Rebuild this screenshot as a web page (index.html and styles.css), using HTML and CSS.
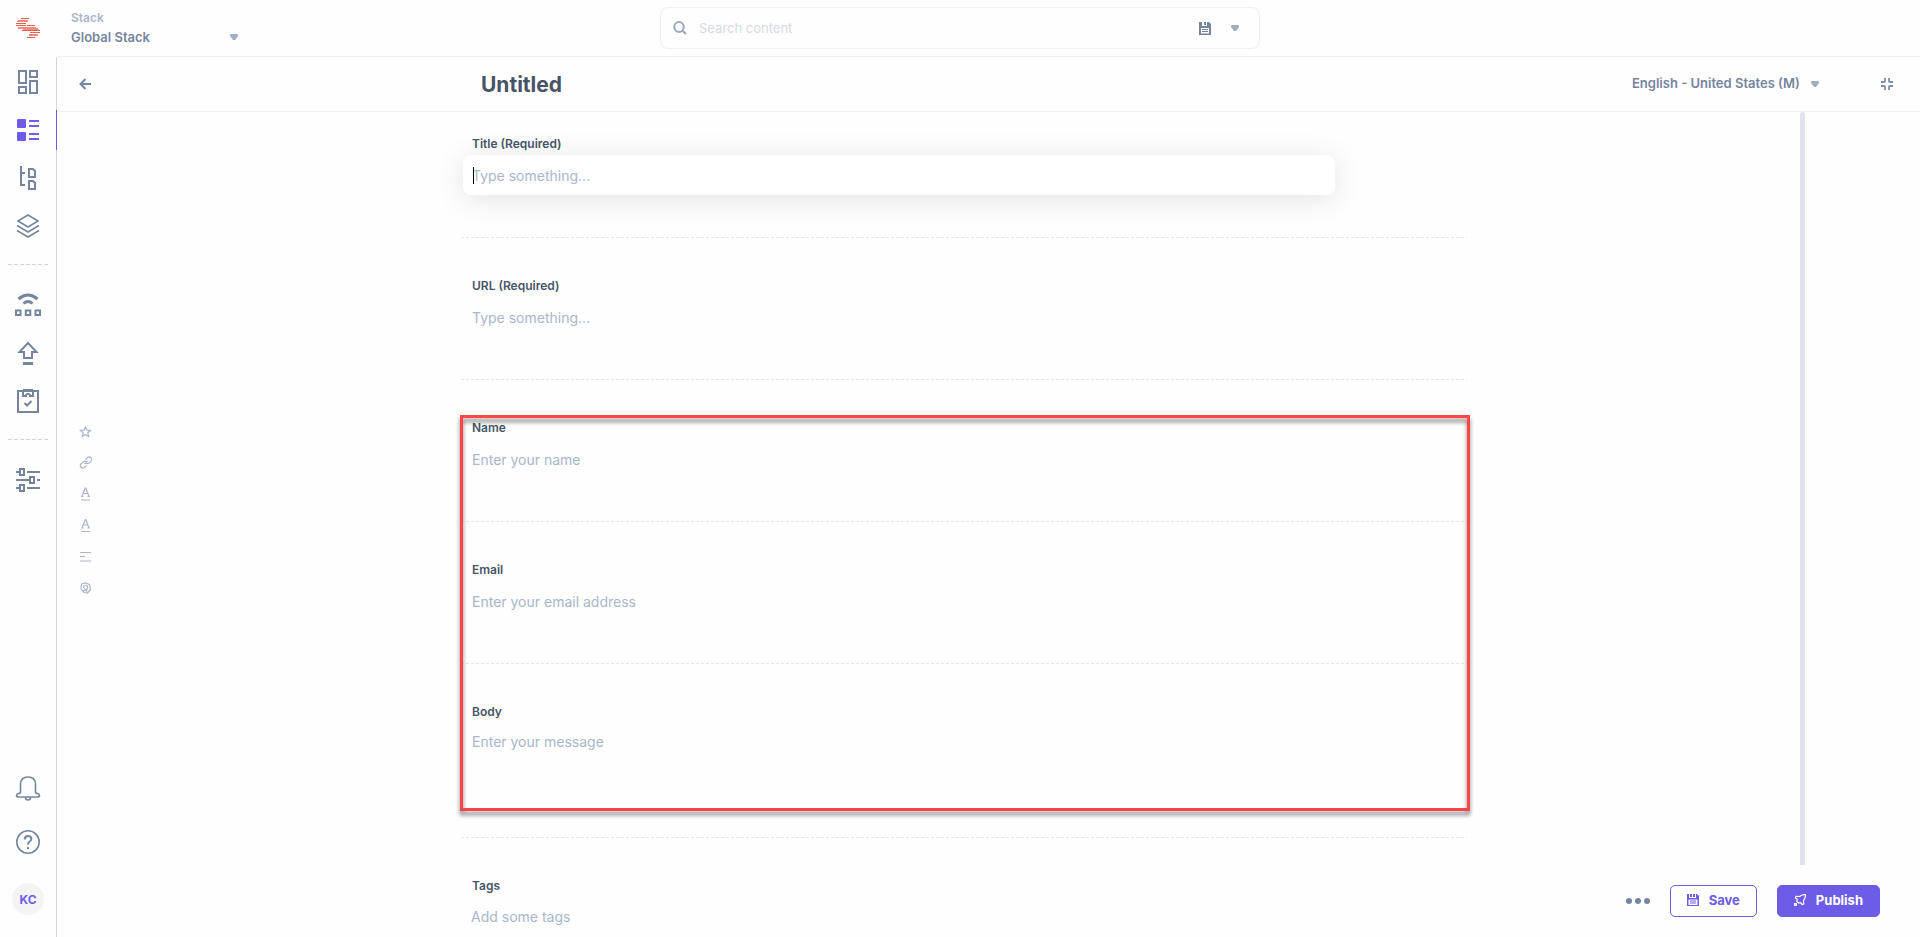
FILE: index.html
```html
<!DOCTYPE html>
<html lang="en">
<head>
<meta charset="utf-8">
<title>Untitled</title>
<link rel="stylesheet" href="styles.css">
</head>
<body>
<div class="app">
  <header class="topbar">
    <div class="topbar-left">
      <a class="logo" href="#" aria-label="Home">
        <svg width="24" height="20" viewBox="0 0 24 20">
          <g fill="#e8604f"><path d="M5 0h8v1H5zM0 5h10v1H0zM0 7h10v1H0zM11 7h8v1h-8zM6 12h8v1H6zM14 12h10v1H14zM14 14h10v1H14zM11 19h8v1h-8z"/></g>
          <g fill="#f58a7d"><path d="M2 2h10v2H2zM1 3h9v1H1zM2 9h18v2H2zM5 10h17v1H5zM7 11h16v1H7zM13 16h9v2h-9z"/></g>
        </svg>
      </a>
      <div class="stack">
        <label class="stack-label" for="stack">Stack</label>
        <div class="picker">
          <select id="stack" class="stack-select"><option>Global Stack</option></select>
          <svg class="caret" width="8" height="6" viewBox="0 0 8 6"><path d="M1 0h6q1 0 1 1v1L5 6H3L0 2V1q0-1 1-1z"/></svg>
        </div>
      </div>
    </div>
    <form class="search">
      <svg width="14" height="14" viewBox="0 0 14 14" fill="none" stroke="#98a7bf" stroke-width="2"><ellipse cx="6" cy="6" rx="4.7" ry="4.9"/><path d="M9.3 9.6 13 13"/></svg>
      <input class="search-input" type="text" aria-label="Search content" placeholder="Search content">
      <button class="icon-btn" type="button" aria-label="Save search">
        <svg width="12" height="13" viewBox="0 0 12 13"><path fill="#76859e" fill-rule="evenodd" d="M0 0h3v4h5V0h2l2 2v11H0zM5 0h2v3H5zM2 6v5.500h8V6zM3 7h6v1H3zM3 9h6v1H3z"/></svg>
      </button>
      <button class="icon-btn" type="button" aria-label="Saved searches">
        <svg class="caret" width="8" height="6" viewBox="0 0 8 6"><path d="M1 0h6q1 0 1 1v1L5 6H3L0 2V1q0-1 1-1z"/></svg>
      </button>
    </form>
  </header>

  <nav class="sidebar" aria-label="Main">
    <a class="nav-item" href="#" aria-label="Dashboard"><svg width="24" height="24" viewBox="0 0 24 24"><path d="M3 1h7v12H3zM14 1h7v6h-7zM3 17h7v6H3zM14 11h7v12h-7z"/></svg></a>
    <a class="nav-item active" href="#" aria-label="Entries"><svg width="24" height="24" viewBox="0 0 24 24"><path class="solid" d="M2 1h7q1 0 1 1v7q0 1-1 1H2q-1 0-1-1V2q0-1 1-1zM2 14h7q1 0 1 1v7q0 1-1 1H2q-1 0-1-1v-7q0-1 1-1z"/><path d="M13 3h10M13 8h10M13 16h10M13 21h10"/></svg></a>
    <a class="nav-item" href="#" aria-label="Content types"><svg width="24" height="24" viewBox="0 0 24 24"><path d="M5 0v19h4M5 7h4M13 3h4l2 2v6h-6zM13 15h4l2 2v6h-6z"/></svg></a>
    <a class="nav-item" href="#" aria-label="Assets"><svg width="24" height="24" viewBox="0 0 24 24"><path class="thin" d="M12 1 22 7 12 13 2 7zM1 11.500 12 18 23 11.500M1 16.500 12 23 23 16.500"/></svg></a>
    <span class="nav-rule"></span>
    <a class="nav-item" href="#" aria-label="Publish queue"><svg width="26" height="24" viewBox="0 0 26 24"><path class="thick" d="M3.500 6Q13-2 22.500 6M8.500 10.500Q13 6.500 17.500 10.500"/><path d="M1 17.500h4.500v4.500H1zM10.800 17.500h4.500v4.500h-4.500zM20.500 17.500H25v4.500h-4.500z"/></svg></a>
    <a class="nav-item" href="#" aria-label="Releases"><svg width="24" height="24" viewBox="0 0 24 24"><path d="M12 2 20.500 11H16v6H8v-6H3.500z"/><path class="thick" d="M7 22.500h10"/></svg></a>
    <a class="nav-item" href="#" aria-label="Tasks"><svg width="24" height="24" viewBox="0 0 24 24"><path d="M2 2h20v21H2zM7 2v5h3V6q2-2.500 4 0v1h3V2M7 1h10M8.500 14l2.500 2.500 4.500-4.500"/></svg></a>
    <span class="nav-rule"></span>
    <a class="nav-item" href="#" aria-label="Settings"><svg width="24" height="24" viewBox="0 0 24 24"><path d="M0 4h4M4 1h4v6H4zM11 4h13M0 12h13M14 9h4v6h-4zM21 12h3M0 20h4M4 17h4v6H4zM11 20h13"/></svg></a>
    <div class="nav-foot">
      <a class="foot-item" href="#" aria-label="Notifications"><svg width="26" height="26" viewBox="0 0 26 26"><path class="thin" d="M5.500 17V9.500q0-7.500 7.500-7.500t7.500 7.500V17q0 1.500 2 1.500 2 .5 2 2t-2 1.500h-19q-2 0-2-1.500t2-2q2 0 2-1.500zM10.500 22.500q0 2.500 2.500 2.500t2.500-2.500"/></svg></a>
      <a class="foot-item" href="#" aria-label="Help"><svg width="26" height="26" viewBox="0 0 26 26"><circle class="thin" cx="13" cy="13" r="11.200"/><path d="M9.700 10.500q0-3.500 3.300-3.500t3.300 3q0 1.500-1.600 2.500-1.700 1-1.700 3M13 18v2"/></svg></a>
      <button class="avatar" type="button">KC</button>
    </div>
  </nav>

  <main class="main">
    <div class="entry-head">
      <button class="icon-btn back" type="button" aria-label="Back"><svg width="12" height="12" viewBox="0 0 12 12" fill="none" stroke="#76859e" stroke-width="2"><path d="M12 6H1.500M6.500 1 1.500 6l5 5"/></svg></button>
      <h1 class="entry-title">Untitled</h1>
      <div class="entry-tools">
        <div class="picker">
          <select class="lang-select" aria-label="Language"><option>English - United States (M)</option></select>
          <svg class="caret" width="8" height="6" viewBox="0 0 8 6"><path d="M1 0h6q1 0 1 1v1L5 6H3L0 2V1q0-1 1-1z"/></svg>
        </div>
        <button class="icon-btn" type="button" aria-label="Collapse"><svg width="12" height="12" viewBox="0 0 12 12" fill="none" stroke="#7f8da8" stroke-width="1.800"><path d="M0 4h3q1 0 1-1V0M8 0v3q0 1 1 1h3M0 8h3q1 0 1 1v3M12 8H9Q8 8 8 9v3"/></svg></button>
      </div>
    </div>

    <div class="entry-body">
      <div class="tools">
        <button class="tool" type="button" aria-label="Title field"><svg width="16" height="16" viewBox="0 0 16 16"><path d="m7.500 3 1.400 3.200 3.600.3-2.700 2.300.9 3.700-3.200-2-3.200 2 .9-3.700-2.700-2.300 3.600-.3z"/></svg></button>
        <button class="tool" type="button" aria-label="URL field"><svg width="16" height="16" viewBox="0 0 16 16"><path d="m7.500 4.500 2-2q1.800-1.300 3.400.2 1.500 1.600.2 3.400l-2 2q-1.700 1.300-3.300 0M8.500 10.500l-2 2q-1.800 1.300-3.400-.2-1.500-1.600-.2-3.400l2-2q1.700-1.300 3.300 0M6.500 9l3-3"/></svg></button>
        <button class="tool" type="button" aria-label="Name field"><svg width="16" height="16" viewBox="0 0 16 16"><path d="M4 10.500 7.200 2h.6L11 10.500M5.200 7.500h4.600M3 10.500h2.500M9.500 10.500H12M3 14h9"/></svg></button>
        <button class="tool" type="button" aria-label="Email field"><svg width="16" height="16" viewBox="0 0 16 16"><path d="M4 11 7.200 2.500h.6L11 11M5.200 8h4.600M3 11h2.500M9.500 11H12M3 14.500h9"/></svg></button>
        <button class="tool" type="button" aria-label="Body field"><svg width="16" height="16" viewBox="0 0 16 16"><path d="M2 4.500h11M2 8.500h5M2 13h11"/></svg></button>
        <button class="tool" type="button" aria-label="Tags field"><svg width="16" height="16" viewBox="0 0 16 16"><path d="M3.500 5 7 4l4.500 1.500 1 5L9.500 14 6 13.500 3 9.500zM5.500 9q0-2.500 2.300-2.500T9.500 9 7.500 10.500 6 9.500M5 11.500l4.500.5"/></svg></button>
      </div>

      <form class="fields">
        <div class="field">
          <label class="label" for="f-title">Title (Required)</label>
          <div class="control focused"><input class="input" id="f-title" type="text" placeholder="Type something..."></div>
        </div>
        <div class="field">
          <label class="label" for="f-url">URL (Required)</label>
          <div class="control"><input class="input" id="f-url" type="text" placeholder="Type something..."></div>
        </div>
        <div class="marked">
          <div class="field">
            <label class="label" for="f-name">Name</label>
            <div class="control"><input class="input" id="f-name" type="text" placeholder="Enter your name"></div>
          </div>
          <div class="field">
            <label class="label" for="f-email">Email</label>
            <div class="control"><input class="input" id="f-email" type="text" placeholder="Enter your email address"></div>
          </div>
          <div class="field">
            <label class="label" for="f-body">Body</label>
            <div class="control"><textarea class="input area" id="f-body" placeholder="Enter your message"></textarea></div>
          </div>
        </div>
        <div class="field last">
          <label class="label" for="f-tags">Tags</label>
          <div class="control"><input class="input tags" id="f-tags" type="text" placeholder="Add some tags"></div>
        </div>
      </form>

      <div class="side">
        <div class="scroll-thumb"></div>
        <div class="actions">
          <button class="icon-btn more" type="button" aria-label="More actions"><svg width="24" height="6" viewBox="0 0 24 6" fill="#76859e"><circle cx="3" cy="3" r="3"/><circle cx="12" cy="3" r="3"/><circle cx="21" cy="3" r="3"/></svg></button>
          <button class="btn" type="button">
            <svg width="12" height="12" viewBox="0 0 12 12"><path fill="currentColor" fill-rule="evenodd" d="M0 0h2v4h7V0h1l2 2v10H0zM3 0h2v3H3zM6 0h2v3H6zM1.500 5.500V11h9V5.500zM3 6.500h6v1H3zM3 8.500h6v1H3z"/></svg>
            Save
          </button>
          <button class="btn primary" type="button">
            <svg width="12" height="12" viewBox="0 0 12 12" fill="none" stroke="currentColor" stroke-width="1.200"><path d="M11.500.5Q8 .5 5.500 2.500L2 2.300 1.500 4l1.800 1.200-.5 2 2 2 2-.5L8 10.500l1.700-.5-.2-3.500Q11.500 4 11.500.5zM.7 9.700h1.600v1.600H.7z"/></svg>
            Publish
          </button>
        </div>
      </div>
    </div>
  </main>
</div>
</body>
</html>
```

FILE: styles.css
```css
* { box-sizing: border-box; }

body {
  margin: 0;
  font-family: Inter, "Liberation Sans", sans-serif;
  color: #475467;
  background: #fefefe;
}

button, input, select, textarea {
  margin: 0;
  padding: 0;
  border: 0;
  background: none;
  font: inherit;
  color: inherit;
  outline: none;
}

.app {
  display: grid;
  grid-template: 57px minmax(0, 1fr) / 57px minmax(0, 1fr);
  height: 100vh;
  overflow: hidden;
}

/* Top bar */
.topbar {
  grid-column: 1 / -1;
  display: grid;
  grid-template-columns: 1fr 600px 1fr;
  align-items: start;
  background: linear-gradient(#edf1f5, #edf1f5) 57px 100% / 100% 1px no-repeat;
}

.topbar-left { display: flex; }

.logo { width: 57px; padding: 18px 0 0 16px; flex: none; }
.logo svg { display: block; }

.stack {
  padding: 10px 0 0 14px;
  font-size: 13px;
  font-weight: 600;
  line-height: 16px;
}

.stack-label { display: block; font-size: 12px; color: #a9b6cb; }

.picker {
  display: grid;
  width: max-content;
  align-items: center;
}
.picker > * { grid-area: 1 / 1; }
.picker .caret { justify-self: end; pointer-events: none; }
.caret { fill: #a0aec2; display: block; }

.stack-select, .lang-select {
  appearance: none;
  height: 20px;
  padding-bottom: 2px;
  font-weight: 600;
  color: #76859e;
}
.stack-select { width: 167px; margin-top: 2px; }

.search {
  display: flex;
  align-items: center;
  height: 42px;
  margin-top: 7px;
  padding: 0 20px 0 12px;
  border: 1px solid #edf1f9;
  border-radius: 8px;
}
.search-input { flex: 1; margin-left: 12px; font-size: 13px; line-height: 20px; }
.search-input::placeholder { color: #d5dae3; opacity: 1; }
.search .icon-btn + .icon-btn { margin-left: 20px; }

.icon-btn { display: flex; align-items: center; cursor: pointer; }

/* Side navigation */
.sidebar {
  display: flex;
  flex-direction: column;
  padding-top: 1px;
  border-right: 1px solid #cfd5e1;
}

.nav-item, .foot-item { display: flex; align-items: center; justify-content: center; }
.nav-item { height: 48px; }
.nav-item path, .foot-item path, .foot-item circle {
  fill: none;
  stroke: #76859e;
  stroke-width: 2;
}
.sidebar .thin { stroke-width: 1.6; }
.sidebar .thick { stroke-width: 3; }
.nav-item.active {
  height: 40px;
  margin: 4px -1px 4px 0;
  border-right: 1px solid #6c5ce7;
}
.nav-item.active path { stroke: #6c5ce7; }
.nav-item.active .solid { fill: #6c5ce7; stroke: none; }

.nav-rule {
  height: 1px;
  margin: 14px 8px 16px;
  background: repeating-linear-gradient(90deg, #cfd5e1 0 4px, transparent 4px 6px);
}

.nav-foot {
  display: flex;
  flex-direction: column;
  align-items: center;
  margin-top: auto;
  padding-bottom: 22px;
}
.foot-item { height: 54px; }
.avatar {
  width: 32px;
  height: 32px;
  margin-top: 14px;
  border-radius: 50%;
  background: #f4f4f5;
  color: #6c5ce7;
  font-size: 12px;
  font-weight: 700;
}

/* Entry header */
.main { display: flex; flex-direction: column; min-width: 0; }

.entry-head, .entry-body {
  display: grid;
  grid-template-columns: 404fr 1006fr 453fr;
}
.entry-head { height: 55px; border-bottom: 1px solid #edeff3; align-items: center; }
.back { margin-left: 22px; width: max-content; }
.entry-title { margin: 0 0 0 20px; padding-top: 2px; font-size: 21px; line-height: 24px; font-weight: 700; }
.entry-tools { display: flex; justify-content: flex-end; align-items: center; gap: 62px; padding-right: 27px; }
.lang-select { width: 187px; font-size: 13px; }

/* Entry form */
.entry-body { flex: 1; min-height: 0; }

.tools { align-self: center; padding: 0 0 30px 21px; display: grid; gap: 15px; }
.tool { width: 16px; height: 16px; }
.tool svg { display: block; }
.tool path { fill: none; stroke: #a9b6cb; stroke-width: 1.2; }

.fields { padding-top: 24px; min-height: 0; }

.field { padding-bottom: 42px; position: relative; }
.field::after {
  content: "";
  position: absolute;
  left: 0;
  right: 0;
  bottom: -1px;
  height: 1px;
  background: repeating-linear-gradient(90deg, #e3e5e8 0 3px, transparent 3px 5px);
}
.field + .field, .marked, .marked + .field { margin-top: 41px; }
.last::after { content: none; }

.label {
  display: block;
  padding-left: 11px;
  margin-bottom: 3px;
  font-size: 12px;
  line-height: 16px;
  font-weight: 600;
}

.control { margin: 0 132px 0 2px; position: relative; }
.input {
  display: block;
  width: 100%;
  height: 40px;
  padding: 0 9px;
  border-radius: 8px;
  font-size: 14px;
  line-height: 20px;
}
.input::placeholder { color: #a9b6cb; opacity: 1; }
.area { height: 72px; padding-top: 9px; resize: none; }
.tags { padding: 0 8px 2px; }

.focused .input { background: #fff; box-shadow: 0 4px 30px rgba(0, 0, 0, 0.11); }
.focused::before {
  content: "";
  position: absolute;
  left: 10px;
  top: 12px;
  width: 1px;
  height: 17px;
  background: #000;
}

/* Highlight frame around the grouped fields */
.marked { position: relative; }
.marked::after {
  content: "";
  position: absolute;
  inset: -5px -3px 26px -1px;
  border: 3px solid #ff4545;
  filter: drop-shadow(0 4px 2px rgba(0, 0, 0, 0.5));
  pointer-events: none;
}

/* Right column */
.side { display: flex; flex-direction: column; min-height: 0; }
.scroll-thumb {
  flex: 1;
  align-self: flex-end;
  width: 5px;
  margin-right: 115px;
  border-radius: 3px 3px 0 0;
  background: #dfe2ea;
}
.actions { display: flex; justify-content: flex-end; align-items: center; gap: 20px; padding: 20px 40px 20px 0; }

.btn {
  display: flex;
  align-items: center;
  gap: 10px;
  height: 32px;
  padding: 0 16px 2px;
  border: 1px solid #6c5ce7;
  border-radius: 5px;
  color: #6c5ce7;
  font-size: 13px;
  font-weight: 700;
  cursor: pointer;
}
.primary { background: #6c5ce7; color: #fff; }
```
